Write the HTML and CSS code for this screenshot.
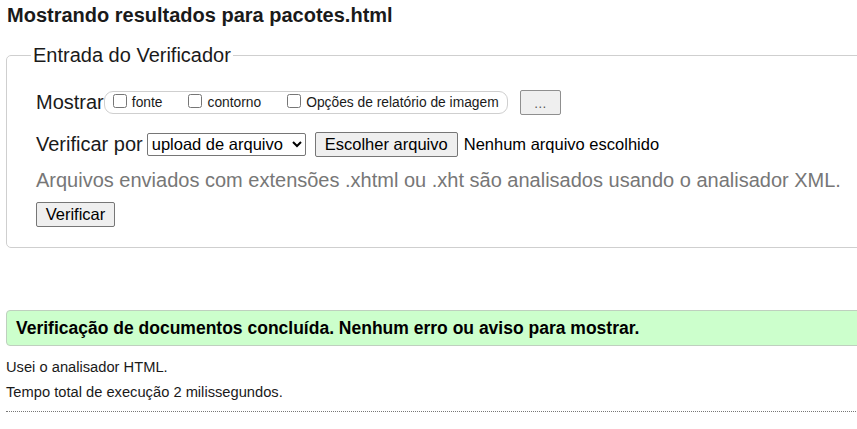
FILE: index.html
```html
<!DOCTYPE html>
<html lang="pt">
<head>
<meta charset="utf-8">
<title>Verificador</title>
<link rel="stylesheet" href="styles.css">
</head>
<body>
<div class="page">
  <h2 class="title">Mostrando resultados para pacotes.html</h2>
  <fieldset class="checker">
    <legend class="legend">Entrada do Verificador</legend>
    <div class="row row-show">
      <span class="label">Mostrar</span>
      <span class="options">
        <label class="opt"><input type="checkbox" class="cb"><span>fonte</span></label>
        <label class="opt"><input type="checkbox" class="cb"><span>contorno</span></label>
        <label class="opt last"><input type="checkbox" class="cb"><span>Opções de relatório de imagem</span></label>
      </span>
      <button class="btn btn-more" type="button">…</button>
    </div>
    <div class="row row-by">
      <span class="label">Verificar por</span>
      <select class="sel"><option>upload de arquivo</option></select>
      <button class="btn btn-file" type="button">Escolher arquivo</button>
      <span class="nofile">Nenhum arquivo escolhido</span>
    </div>
    <p class="hint">Arquivos enviados com extensões .xhtml ou .xht são analisados usando o analisador XML.</p>
    <div class="row row-submit">
      <button class="btn btn-submit" type="button">Verificar</button>
    </div>
  </fieldset>
  <p class="success">Verificação de documentos concluída. Nenhum erro ou aviso para mostrar.</p>
  <div class="infos">
    <p class="info">Usei o analisador HTML.</p>
    <p class="info">Tempo total de execução 2 milissegundos.</p>
  </div>
  <hr class="sep">
</div>
</body>
</html>
```
FILE: styles.css
```css
html, body {
  margin: 0;
  padding: 0;
  overflow: hidden;
  background: #fff;
}
body {
  font-family: "Liberation Sans", Arial, sans-serif;
  color: #1a1a1a;
}
.page {
  width: 900px;
  padding-left: 6px;
}
.title {
  margin: 4px 0 0 1px;
  font-size: 20px;
  font-weight: bold;
  line-height: 23px;
  color: #1a1a1a;
}
.checker {
  margin: 17px 0 0 0;
  padding: 0 0 20px 29px;
  border: 1px solid #cfcfcf;
  border-radius: 5px;
  min-width: 0;
}
.legend {
  margin-left: -5px;
  padding: 0 2px;
  font-size: 20px;
  line-height: 23px;
  color: #1a1a1a;
}
.row {
  display: flex;
  align-items: center;
}
.label {
  font-size: 20px;
  color: #1a1a1a;
}
.row-show {
  margin-top: 22px;
  height: 26px;
}
.options {
  display: inline-flex;
  align-items: center;
  height: 21px;
  padding: 0 8px 0 4px;
  border: 1px solid #cfcfcf;
  border-radius: 9px;
  font-size: 13.8px;
}
.opt {
  display: inline-flex;
  align-items: center;
  margin-right: 22px;
}
.opt.last {
  margin-right: 0;
}
.cb {
  width: 14px;
  height: 14px;
  margin: 0 5px 2px 4px;
}
.btn {
  font-family: "Liberation Sans", Arial, sans-serif;
  font-size: 16.5px;
  color: #000;
  background: #efefef;
  border: 1px solid #767676;
  border-radius: 2px;
  padding: 0 6px;
  height: 25px;
}
.btn-more {
  margin-left: 12px;
  width: 41px;
  font-size: 13px;
  color: #555;
  border-color: #8f8f8f;
  padding-top: 3px;
}
.row-by {
  margin-top: 16px;
  height: 26px;
}
.sel {
  margin-left: 4px;
  width: 159px;
  height: 23px;
  font-family: "Liberation Sans", Arial, sans-serif;
  font-size: 16.5px;
  color: #000;
  border: 1px solid #767676;
  border-radius: 2px;
  background: #fff;
}
.btn-file {
  margin-left: 9px;
  width: 143px;
  padding: 0;
}
.nofile {
  margin-left: 6px;
  font-size: 16.5px;
  color: #000;
}
.hint {
  margin: 12px 0 0 0;
  font-size: 20px;
  line-height: 23px;
  color: #777;
}
.row-submit {
  margin-top: 10px;
}
.btn-submit {
  width: 79px;
  padding: 0;
}
.success {
  margin: 62px 0 0 0;
  height: 34px;
  padding-left: 9px;
  display: flex;
  align-items: center;
  background: #ccffcc;
  border: 1px solid #bfd0bf;
  border-radius: 4px;
  font-size: 17.5px;
  font-weight: bold;
  color: #000;
}
.infos {
  margin-top: 9px;
}
.info {
  margin: 0;
  font-size: 14.7px;
  line-height: 25px;
  color: #1a1a1a;
}
.sep {
  margin: 6px 0 0 0;
  border: 0;
  border-top: 1px dotted #777;
  height: 0;
}
```
